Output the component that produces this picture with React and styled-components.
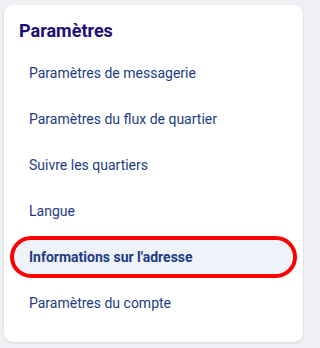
import styled, { createGlobalStyle } from "styled-components";

const GlobalStyle = createGlobalStyle`
  html, body {
    margin: 0;
    padding: 0;
    background: #eef0f3;
  }
  body {
    font-family: Roboto, "Liberation Sans", sans-serif;
  }
`;

const Page = styled.div`
  width: 308px;
  box-sizing: border-box;
  padding: 5px 5px 7px 4px;
`;

const Card = styled.nav`
  background: #ffffff;
  border-radius: 9px;
  box-shadow: 0 1px 3px rgba(0, 0, 0, 0.12);
  padding: 16px 12px 22px 10px;
`;

const Title = styled.h2`
  margin: 0 0 15px 5px;
  font-size: 18px;
  line-height: 20px;
  font-weight: 700;
  color: #1c0e75;
`;

const Menu = styled.ul`
  list-style: none;
  margin: 0;
  padding: 0;
  display: flex;
  flex-direction: column;
  gap: 12px;
`;

const Item = styled.li`
  position: relative;
  height: 34px;
  display: flex;
  align-items: center;
  padding: 0 15px;
  border-radius: 12px;
  font-size: 14px;
  color: #1d3c83;
  font-weight: ${(p) => (p.$active ? 700 : 400)};
  background: ${(p) => (p.$active ? "#eff2f8" : "transparent")};
`;

const Ring = styled.span`
  position: absolute;
  top: -4px;
  bottom: -4px;
  left: -4px;
  right: -6px;
  border: 4px solid #f00;
  border-radius: 22px;
  pointer-events: none;
`;

const items = [
  "Paramètres de messagerie",
  "Paramètres du flux de quartier",
  "Suivre les quartiers",
  "Langue",
  "Informations sur l'adresse",
  "Paramètres du compte",
];

export default function App() {
  return (
    <>
      <GlobalStyle />
      <Page>
        <Card>
          <Title>Paramètres</Title>
          <Menu>
            {items.map((label) => {
              const active = label === "Informations sur l'adresse";
              return (
                <Item key={label} $active={active}>
                  {label}
                  {active && <Ring />}
                </Item>
              );
            })}
          </Menu>
        </Card>
      </Page>
    </>
  );
}
